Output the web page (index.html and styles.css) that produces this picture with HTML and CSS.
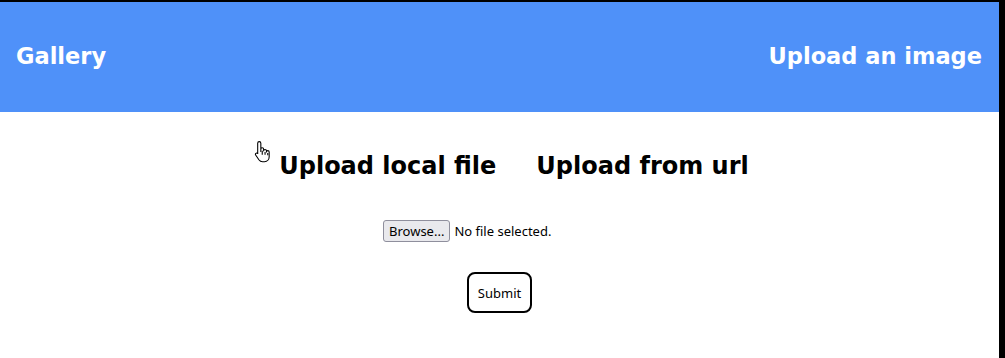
FILE: index.html
```html
<!DOCTYPE html>
<html lang="en">
<head>
    <meta charset="UTF-8">
    <meta name="viewport" content="width=device-width, initial-scale=1.0">
    <title>Upload an image</title>
    <link rel="stylesheet" href="styles.css">
</head>
<body>
    <div class="page">
        <header class="top-bar">
            <a href="#" class="brand">Gallery</a>
            <a href="#" class="nav-link">Upload an image</a>
        </header>

        <main class="upload">
            <div class="tabs">
                <span class="tab">Upload local file</span>
                <span class="tab">Upload from url</span>
                <svg class="cursor" width="18" height="26" viewBox="0 0 16 24">
                    <path d="M4.5 1.5c.8 0 1.5.7 1.5 1.5v7.5V8.5c0-.8.6-1.4 1.3-1.4s1.3.6 1.3 1.4v1.5c0-.8.6-1.3 1.3-1.3s1.3.6 1.3 1.3v1c0-.7.5-1.2 1.2-1.2s1.3.5 1.3 1.2v4.5c0 2.5-1.8 4.5-4.3 4.5H7.6c-1.4 0-2.6-.7-3.4-1.8L1.2 13.8c-.4-.6-.2-1.3.4-1.6.5-.3 1.2-.2 1.6.3l-.2-.2.1.1V3c0-.8.6-1.5 1.4-1.5z" fill="#fff" stroke="#000" stroke-width="1" stroke-linejoin="round"/>
                    <path d="M7.3 10v3.5M9.9 11v2.5M12.4 12v2" stroke="#000" stroke-width="1" fill="none"/>
                </svg>
            </div>

            <form class="upload-form" onsubmit="event.preventDefault()">
                <div class="file-row">
                    <button type="button" class="browse">Browse...</button>
                    <span class="file-name">No file selected.</span>
                </div>
                <button type="submit" class="submit">Submit</button>
            </form>
        </main>
    </div>
</body>
</html>
```

FILE: styles.css
```css
body {
    margin: 0;
    background-color: #000;
    font-family: "DejaVu Sans", sans-serif;
}

.page {
    margin: 2px 6px 0 0;
    height: 356px;
    background-color: #fff;
}

.top-bar {
    height: 110px;
    background-color: #4f91f9;
    display: flex;
    justify-content: space-between;
    align-items: center;
    padding: 0 17px 0 16px;
}

.top-bar a {
    color: #fff;
    font-size: 22.5px;
    font-weight: bold;
    text-decoration: none;
    margin-top: -2px;
}

.upload {
    display: flex;
    flex-direction: column;
    align-items: center;
}

.tabs {
    position: relative;
    display: flex;
    gap: 40px;
    margin: 40px 0 0 29px;
}

.tab {
    font-size: 24px;
    font-weight: bold;
    color: #000;
}

.cursor {
    position: absolute;
    left: -25px;
    top: -12px;
}

.upload-form {
    display: flex;
    flex-direction: column;
    align-items: center;
    margin-top: 40px;
}

.file-row {
    width: 233px;
    display: flex;
    align-items: center;
    gap: 4px;
    font-family: "Noto Sans", sans-serif;
    font-size: 13px;
}

.browse {
    font-family: inherit;
    font-size: 13px;
    padding: 1px 5px;
    background-color: #e9e9ed;
    border: 1px solid #8f8f9d;
    border-radius: 3px;
    color: #000;
}

.submit {
    margin-top: 30px;
    padding: 0 9px;
    height: 41px;
    background-color: #fff;
    border: 2px solid #000;
    border-radius: 8px;
    font-family: "Noto Sans", sans-serif;
    font-size: 13px;
    color: #000;
    cursor: pointer;
}
```
